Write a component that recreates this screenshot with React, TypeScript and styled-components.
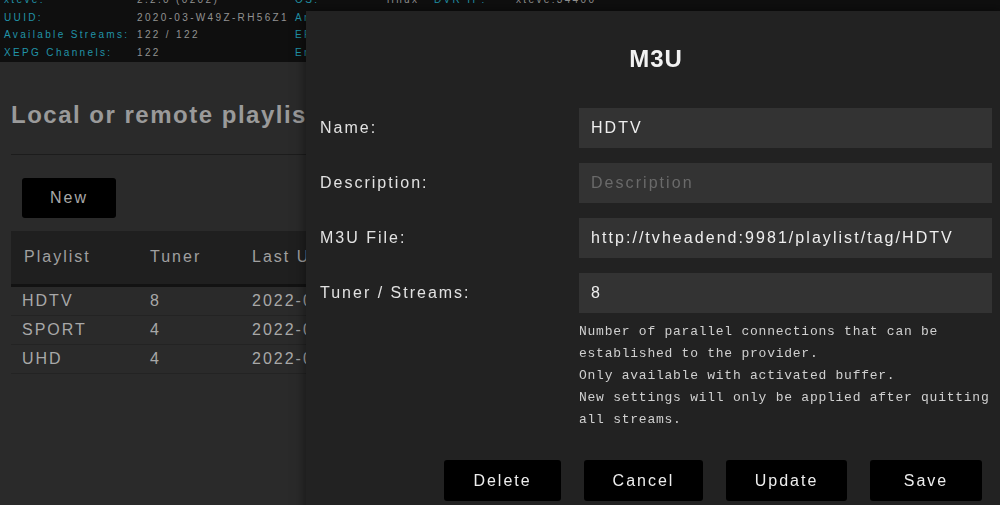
import styled, { createGlobalStyle } from 'styled-components';

const GlobalStyle = createGlobalStyle`
  html, body {
    margin: 0;
    padding: 0;
    background: #2a2a2a;
    overflow: hidden;
  }
  body {
    font-family: "Liberation Sans", Arial, sans-serif;
  }
`;

const infoRows = [
  ['xteve:', '2.2.0 (0202)', 'OS:', 'linux', 'DVR IP:', 'xteve:34400'],
  ['UUID:', '2020-03-W49Z-RH56Z1', 'Architecture:', 'amd64', '', ''],
  ['Available Streams:', '122 / 122', 'EPG Source:', 'XEPG', '', ''],
  ['XEPG Channels:', '122', 'Errors:', '0', '', ''],
];

const playlists = [
  { name: 'HDTV', tuner: 8, updated: '2022-03-12 04:00' },
  { name: 'SPORT', tuner: 4, updated: '2022-03-12 04:00' },
  { name: 'UHD', tuner: 4, updated: '2022-03-12 04:00' },
];

const fields = [
  { label: 'Name:', value: 'HDTV', placeholder: 'Name' },
  { label: 'Description:', value: '', placeholder: 'Description' },
  { label: 'M3U File:', value: 'http://tvheadend:9981/playlist/tag/HDTV', placeholder: 'URL' },
  { label: 'Tuner / Streams:', value: '8', placeholder: '' },
];

const App = () => {
  return (
    <>
      <GlobalStyle />
      <Header>
        <InfoGrid>
          {infoRows.map((row, i) =>
            row.map((cell, j) => (
              <InfoCell key={`${i}-${j}`} $label={j % 2 === 0}>
                {cell}
              </InfoCell>
            ))
          )}
        </InfoGrid>
      </Header>

      <Content>
        <PageTitle>Local or remote playlists</PageTitle>
        <Divider />
        <NewButton>New</NewButton>
        <Table>
          <thead>
            <tr>
              <Th>Playlist</Th>
              <Th>Tuner</Th>
              <Th>Last Update</Th>
            </tr>
          </thead>
          <tbody>
            {playlists.map((p) => (
              <tr key={p.name}>
                <Td>{p.name}</Td>
                <Td>{p.tuner}</Td>
                <Td>{p.updated}</Td>
              </tr>
            ))}
          </tbody>
        </Table>
      </Content>

      <Modal>
        <ModalTitle>M3U</ModalTitle>
        <Form>
          {fields.map((f) => (
            <FieldRow key={f.label}>
              <FieldLabel>{f.label}</FieldLabel>
              <FieldInput defaultValue={f.value} placeholder={f.placeholder} />
            </FieldRow>
          ))}
          <FieldRow>
            <span />
            <Hint>
              Number of parallel connections that can be
              <br />
              established to the provider.
              <br />
              Only available with activated buffer.
              <br />
              New settings will only be applied after quitting
              <br />
              all streams.
            </Hint>
          </FieldRow>
        </Form>
        <ButtonBar>
          <ModalButton $w={117}>Delete</ModalButton>
          <ModalButton $w={119}>Cancel</ModalButton>
          <ModalButton $w={121}>Update</ModalButton>
          <ModalButton $w={112}>Save</ModalButton>
        </ButtonBar>
      </Modal>
    </>
  );
};
export default App;

const Header = styled.div`
  background: #0f0f0f;
  height: 71px;
  margin-top: -9px;
  padding: 0 4px;
  box-sizing: border-box;
  overflow: hidden;
`;

const InfoGrid = styled.div`
  display: grid;
  grid-template-columns: 133px 158px 92px 47px 82px auto;
  grid-auto-rows: 17.5px;
  align-items: center;
`;

const InfoCell = styled.span<{ $label: boolean }>`
  font-size: 10px;
  letter-spacing: 2.35px;
  white-space: nowrap;
  color: ${(p) => (p.$label ? '#2193a8' : '#929292')};
`;

const Content = styled.div`
  padding: 0 0 0 11px;
`;

const PageTitle = styled.h1`
  margin: 0;
  padding: 39px 0 0;
  height: 82px;
  box-sizing: border-box;
  font-size: 24px;
  font-weight: bold;
  letter-spacing: 1.5px;
  color: #9a9a9a;
  white-space: nowrap;
`;

const Divider = styled.div`
  height: 1px;
  background: #1c1c1c;
  margin: 10px 0 23px;
`;

const NewButton = styled.button`
  margin-left: 11px;
  width: 94px;
  height: 40px;
  background: #000;
  border: none;
  border-radius: 3px;
  color: #a8a8a8;
  font-family: inherit;
  font-size: 16px;
  letter-spacing: 2px;
`;

const Table = styled.table`
  margin-top: 13px;
  border-collapse: collapse;
  width: 100%;
`;

const Th = styled.th`
  background: #1f1f1f;
  height: 51px;
  padding: 0 0 2px 13px;
  text-align: left;
  font-weight: normal;
  font-size: 16px;
  letter-spacing: 2px;
  color: #a0a0a0;
  border-bottom: 3px solid #121212;
  &:nth-child(1) { width: 113px; }
  &:nth-child(2) { width: 89px; }
`;

const Td = styled.td`
  height: 28px;
  padding: 0 0 0 11px;
  font-size: 16px;
  letter-spacing: 2px;
  color: #a8a8a8;
  border-bottom: 1px solid #232323;
  &:nth-child(n + 2) { padding-left: 13px; }
`;

const Modal = styled.div`
  position: fixed;
  top: 11px;
  left: 306px;
  width: 696px;
  bottom: -20px;
  background: #222;
  box-shadow: 0 0 12px rgba(0, 0, 0, 0.55);
  padding: 34px 10px 0 14px;
  box-sizing: border-box;
  display: flex;
  flex-direction: column;
`;

const ModalTitle = styled.h2`
  margin: 0 0 35px;
  text-align: center;
  font-size: 24px;
  font-weight: bold;
  letter-spacing: 1px;
  color: #f2f2f2;
  line-height: 28px;
`;

const Form = styled.div`
  display: flex;
  flex-direction: column;
  gap: 15px;
`;

const FieldRow = styled.div`
  display: grid;
  grid-template-columns: 259px 413px;
  align-items: center;
`;

const FieldLabel = styled.label`
  font-size: 16px;
  letter-spacing: 2px;
  color: #e2e2e2;
`;

const FieldInput = styled.input`
  height: 40px;
  box-sizing: border-box;
  background: #333;
  border: none;
  outline: none;
  padding: 0 12px;
  font-family: inherit;
  font-size: 16px;
  letter-spacing: 2.05px;
  color: #eee;
  &::placeholder {
    color: #6a6a6a;
  }
`;

const Hint = styled.p`
  margin: -7px 0 0;
  font-family: "Liberation Mono", "DejaVu Sans Mono", monospace;
  font-size: 13px;
  letter-spacing: 0.75px;
  line-height: 22px;
  color: #d0d0d0;
`;

const ButtonBar = styled.div`
  display: flex;
  justify-content: flex-end;
  gap: 23px;
  padding-right: 10px;
  margin-top: 29px;
`;

const ModalButton = styled.button<{ $w: number }>`
  width: ${(p) => p.$w}px;
  height: 41px;
  background: #000;
  border: none;
  border-radius: 3px;
  color: #eee;
  font-family: inherit;
  font-size: 16px;
  letter-spacing: 2px;
`;
